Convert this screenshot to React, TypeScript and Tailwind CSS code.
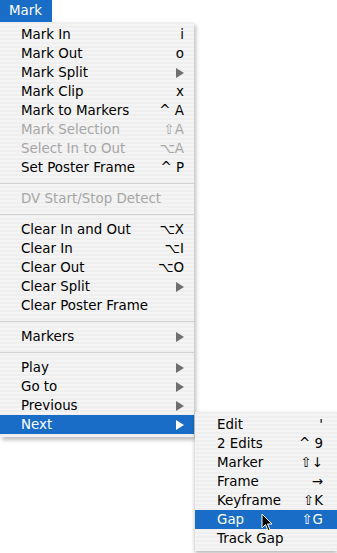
import React from "react";

type Row =
  | { kind: "sep" }
  | { kind: "item"; label: string; key?: string; sub?: boolean; disabled?: boolean; active?: boolean };

const mainRows: Row[] = [
  { kind: "item", label: "Mark In", key: "i" },
  { kind: "item", label: "Mark Out", key: "o" },
  { kind: "item", label: "Mark Split", sub: true },
  { kind: "item", label: "Mark Clip", key: "x" },
  { kind: "item", label: "Mark to Markers", key: "^ A" },
  { kind: "item", label: "Mark Selection", key: "⇧A", disabled: true },
  { kind: "item", label: "Select In to Out", key: "⌥A", disabled: true },
  { kind: "item", label: "Set Poster Frame", key: "^ P" },
  { kind: "sep" },
  { kind: "item", label: "DV Start/Stop Detect", disabled: true },
  { kind: "sep" },
  { kind: "item", label: "Clear In and Out", key: "⌥X" },
  { kind: "item", label: "Clear In", key: "⌥I" },
  { kind: "item", label: "Clear Out", key: "⌥O" },
  { kind: "item", label: "Clear Split", sub: true },
  { kind: "item", label: "Clear Poster Frame" },
  { kind: "sep" },
  { kind: "item", label: "Markers", sub: true },
  { kind: "sep" },
  { kind: "item", label: "Play", sub: true },
  { kind: "item", label: "Go to", sub: true },
  { kind: "item", label: "Previous", sub: true },
  { kind: "item", label: "Next", sub: true, active: true },
];

const nextRows: Row[] = [
  { kind: "item", label: "Edit", key: "'" },
  { kind: "item", label: "2 Edits", key: "^ 9" },
  { kind: "item", label: "Marker", key: "⇧↓" },
  { kind: "item", label: "Frame", key: "→" },
  { kind: "item", label: "Keyframe", key: "⇧K" },
  { kind: "item", label: "Gap", key: "⇧G", active: true },
  { kind: "item", label: "Track Gap" },
];

function Arrow({ white }: { white?: boolean }) {
  return (
    <svg width="8" height="10" viewBox="0 0 8 10" className="shrink-0">
      <polygon points="0,0 8,5 0,10" fill={white ? "#ffffff" : "#6f6f6f"} />
    </svg>
  );
}

function MenuRows({ rows, padL, padR }: { rows: Row[]; padL: string; padR: string }) {
  return (
    <>
      {rows.map((r, i) =>
        r.kind === "sep" ? (
          <div key={i} className="h-[12px] flex items-center">
            <div className="h-px w-full bg-[#d2d2d2]" />
          </div>
        ) : (
          <div
            key={i}
            className={`h-[19px] flex items-center justify-between ${padL} ${padR} ${
              r.active ? "bg-[#1a6dc6] text-white" : r.disabled ? "text-[#a6a6a6]" : "text-black"
            }`}
          >
            <span>{r.label}</span>
            {r.sub ? <Arrow white={r.active} /> : r.key ? <span className="whitespace-pre">{r.key}</span> : null}
          </div>
        )
      )}
    </>
  );
}

export default function App() {
  return (
    <div
      className="relative w-[337px] h-[553px] bg-white overflow-hidden text-[13.4px] leading-none"
      style={{ fontFamily: '"DejaVu Sans", "Liberation Sans", sans-serif' }}
    >
      <div className="h-[22px] flex">
        <div className="w-[52px] bg-[#1a6dc6] text-white flex items-center pl-[9px]">Mark</div>
      </div>

      <div className="w-[194px] py-[3px] bg-[repeating-linear-gradient(180deg,#efefef_0px,#efefef_2px,#f4f4f4_2px,#f4f4f4_4px)] shadow-[2px_3px_4px_rgba(0,0,0,0.25)]">
        <MenuRows rows={mainRows} padL="pl-[21px]" padR="pr-[10px]" />
      </div>

      <div className="absolute left-[195px] top-[412px] w-[142px] py-[3px] bg-[repeating-linear-gradient(180deg,#efefef_0px,#efefef_2px,#f4f4f4_2px,#f4f4f4_4px)] shadow-[0_2px_4px_rgba(0,0,0,0.3)]">
        <MenuRows rows={nextRows} padL="pl-[22px]" padR="pr-[14px]" />
      </div>

      <svg className="absolute left-[261px] top-[513px]" width="12" height="19" viewBox="0 0 12 19">
        <polygon
          points="1,1 1,15 4.5,11.5 7,17.5 9,16.7 6.6,11 11,11"
          fill="#000"
          stroke="#fff"
          strokeWidth="1"
          strokeLinejoin="round"
        />
      </svg>
    </div>
  );
}
